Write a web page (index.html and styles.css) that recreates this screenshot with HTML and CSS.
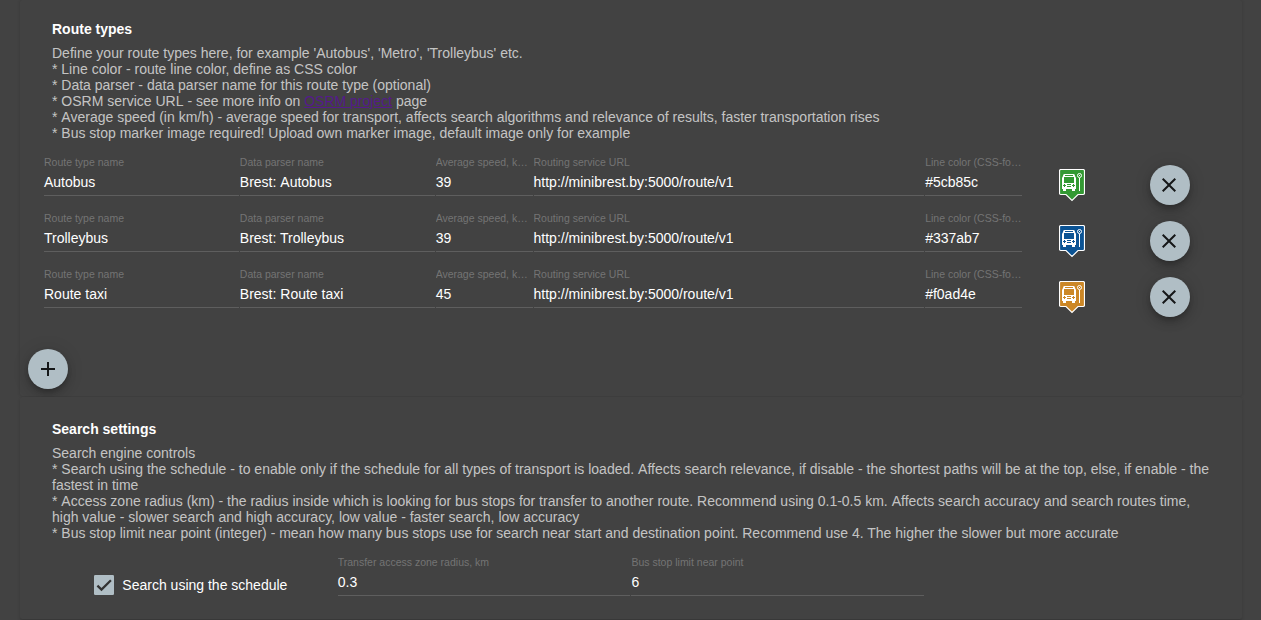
FILE: index.html
```
<!DOCTYPE html>
<html lang="en">
<head>
<meta charset="utf-8">
<title>Settings</title>
<link rel="stylesheet" href="styles.css">
</head>
<body>
<svg class="defs" width="0" height="0">
  <symbol id="marker" viewBox="0 0 26 33">
    <path d="M2 .5H24Q25.500 .5 25.500 2V24Q25.500 25.500 24 25.500H19L13 31.500L7 25.500H2Q.5 25.500 .5 24V2Q.5 .5 2 .5Z" fill="currentColor" stroke="#fff" stroke-width="1.200"/>
    <path fill="#fff" fill-rule="evenodd" d="M5.500 5H14.500Q16 5 16 7L17 9V20H16V22H13V20H7V22H4V20H3V9L4 7Q4 5 5.500 5ZM6 6V7H14V6ZM5 8V14H15V8ZM4 16V17H5V18H6V17H7V16H6V15H5V16ZM13 16V17H14V18H15V17H16V16H15V15H14V16ZM8 15V16H12V15ZM8 17V18H12V17Z"/>
    <circle cx="20.500" cy="6.500" r="2" fill="none" stroke="#fff"/>
    <path d="M20 6H21V7H20ZM20 9H21V22H20Z" fill="#fff"/>
  </symbol>
  <symbol id="close" viewBox="0 0 24 24"><path d="M19 6.410L17.590 5 12 10.590 6.410 5 5 6.410 10.590 12 5 17.590 6.410 19 12 13.410 17.590 19 19 17.590 13.410 12z"/></symbol>
</svg>
<main>
  <section class="card routes">
    <h2>Route types</h2>
    <p>Define your route types here, for example 'Autobus', 'Metro', 'Trolleybus' etc.<br>* Line color - route line color, define as CSS color<br>* Data parser - data parser name for this route type (optional)<br>* OSRM service URL <i class="gap">-</i> see more info on <a href="#">OSRM project</a> page<br>* <i>Average</i> speed (in km/h) - average speed for transport, affects search algorithms and relevance of results, faster transportation rises<br>* Bus stop marker image required! Upload own marker image, default image only for example</p>
    <div class="grid">
      <div class="field w2"><label>Route type name</label><span>Autobus</span></div>
      <div class="field w2"><label>Data parser name</label><span>Brest: <i>Autobus</i></span></div>
      <div class="field"><label>Average speed, km/h</label><span>39</span></div>
      <div class="field w4"><label>Routing service URL</label><span>http://minibrest.by:5000/route/v1</span></div>
      <div class="field"><label>Line color (CSS-format)</label><span>#5cb85c</span></div>
      <div class="cell"><svg class="marker green"><use href="#marker"/></svg></div>
      <div class="cell"><button class="fab remove"><svg><use href="#close"/></svg></button></div>
    </div>
    <div class="grid">
      <div class="field w2"><label>Route type name</label><span>Trolleybus</span></div>
      <div class="field w2"><label>Data parser name</label><span>Brest: Trolleybus</span></div>
      <div class="field"><label>Average speed, km/h</label><span>39</span></div>
      <div class="field w4"><label>Routing service URL</label><span>http://minibrest.by:5000/route/v1</span></div>
      <div class="field"><label>Line color (CSS-format)</label><span>#337ab7</span></div>
      <div class="cell"><svg class="marker blue"><use href="#marker"/></svg></div>
      <div class="cell"><button class="fab remove"><svg><use href="#close"/></svg></button></div>
    </div>
    <div class="grid">
      <div class="field w2"><label>Route type name</label><span>Route taxi</span></div>
      <div class="field w2"><label>Data parser name</label><span>Brest: Route taxi</span></div>
      <div class="field"><label>Average speed, km/h</label><span>45</span></div>
      <div class="field w4"><label>Routing service URL</label><span>http://minibrest.by:5000/route/v1</span></div>
      <div class="field"><label>Line color (CSS-format)</label><span>#f0ad4e</span></div>
      <div class="cell"><svg class="marker orange"><use href="#marker"/></svg></div>
      <div class="cell"><button class="fab remove"><svg><use href="#close"/></svg></button></div>
    </div>
    <button class="fab add"><svg viewBox="0 0 24 24"><path d="M19 13h-6v6h-2v-6H5v-2h6V5h2v6h6v2z"/></svg></button>
  </section>
  <section class="card search">
    <h2>Search settings</h2>
    <p>Search engine controls<br>* Search using the schedule - to enable only if the schedule for all types of transport is loaded. <i>Affects</i> search relevance, if disable - the shortest paths will be at the top, else, if enable - the fastest in time<br>* <i>Access</i> zone radius (km) - the radius inside which is looking for bus stops for transfer to another route. Recommend using 0.1-0.5 km. <i>Affects</i> search accuracy and search routes time, high value - slower search and high accuracy, low value - faster search, low accuracy<br>* Bus stop limit near point (integer) - mean how many bus stops use for search near start and destination point. Recommend use 4. The higher the slower but more accurate</p>
    <div class="grid">
      <div class="cell check w3"><svg viewBox="0 0 24 24"><rect width="24" height="24" rx="1.500" fill="#b0bec5"/><path d="M4.100 12.700L9 17.600 20.300 6.300" fill="none" stroke="#333" stroke-width="2.700"/></svg><span>Search using the schedule</span></div>
      <div class="field w3"><label>Transfer access zone radius, km</label><span>0.3</span></div>
      <div class="field w3"><label>Bus stop limit near point</label><span>6</span></div>
    </div>
  </section>
</main>
</body>
</html>
```
FILE: styles.css
```
* { box-sizing: border-box; }
body {
  margin: 0;
  height: 620px;
  overflow: hidden;
  background: #424242;
  color: #fff;
  font: 14px/16px "Liberation Sans", Arial, sans-serif;
}
.defs { position: absolute; }
main { padding: 0 19px 0 20px; }
.card {
  background: #424242;
  border-radius: 2px;
  box-shadow: 0 0 3px rgba(0, 0, 0, .17);
}
.routes { height: 396px; padding: 21px 24px 0; }
.search {
  height: 222px;
  margin-top: 1px;
  padding: 24px 24px 0;
  box-shadow: 0 2px 3px rgba(0, 0, 0, .17);
}
h2 { margin: 0 8px 8px; font-size: 14px; line-height: 16px; font-weight: 700; }
p { margin: 0 8px 12px; color: rgba(255, 255, 255, .7); }
a { color: #551a8b; }
/* keeps the space before a word from being kerned into it */
i { font-style: normal; padding-left: .02px; }
.gap { padding-left: .6px; }
.grid {
  display: grid;
  grid-template-columns: repeat(12, 97.920px);
  height: 56px;
}
.w2 { grid-column: span 2; }
.w3 { grid-column: span 3; }
.w4 { grid-column: span 4; }
.field {
  height: 43px;
  margin-right: 1px;
  padding-top: 3px;
  border-bottom: 1px solid #5e5e5e;
  min-width: 0;
}
.field label {
  display: block;
  overflow: hidden;
  text-overflow: ellipsis;
  white-space: nowrap;
  color: #747474;
  font-size: 10.500px;
  line-height: 12px;
}
.field span { display: block; margin-top: 6px; }
.cell { display: flex; justify-content: center; align-items: flex-start; }
.marker { width: 26px; height: 33px; margin-top: 16px; }
.green { color: #339933; }
.blue { color: #0b5394; }
.orange { color: #cc8726; }
.fab {
  display: flex;
  align-items: center;
  justify-content: center;
  width: 40px;
  height: 40px;
  margin-top: 12px;
  padding: 0;
  border: 0;
  border-radius: 50%;
  background: #b0bec5;
  box-shadow: 0 3px 5px -1px rgba(0, 0, 0, .2), 0 6px 10px rgba(0, 0, 0, .14), 0 1px 18px rgba(0, 0, 0, .12);
}
.fab svg { width: 24px; height: 24px; fill: #151718; }
.remove { padding-right: 1px; }
.add { margin: 28px 0 0 -16px; }
.check { align-items: center; gap: 8px; padding-top: 8px; }
.check svg { width: 20px; height: 20px; }
```
